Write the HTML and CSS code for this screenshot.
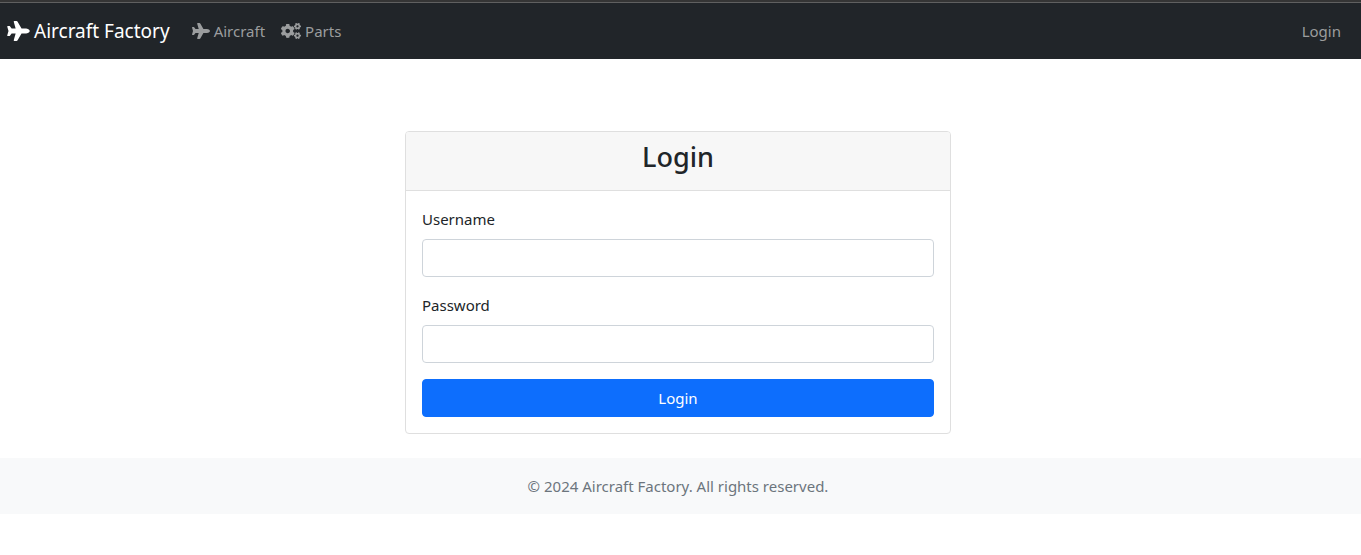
FILE: index.html
```html
<!DOCTYPE html>
<html lang="en">
<head>
<meta charset="utf-8">
<meta name="viewport" content="width=device-width, initial-scale=1">
<title>Login - Aircraft Factory</title>
<link rel="stylesheet" href="styles.css">
</head>
<body>
<svg class="sprite" aria-hidden="true">
  <symbol id="plane" viewBox="0 0 576 512"><path d="M482.3 192c34.2 0 93.7 29 93.7 64c0 36-59.5 64-93.7 64l-116.6 0L265.2 495.9c-5.7 10-16.3 16.1-27.8 16.1l-56.2 0c-10.6 0-18.3-10.2-15.4-20.4l49-171.6L112 320 68.8 377.6c-3 4-7.8 6.4-12.8 6.4l-42 0c-7.8 0-14-6.3-14-14c0-1.3 .2-2.6 .5-3.9L32 256 .5 145.9c-.4-1.3-.5-2.6-.5-3.9c0-7.8 6.3-14 14-14l42 0c5 0 9.8 2.4 12.8 6.4L112 192l102.9 0-49-171.6C162.9 10.2 170.6 0 181.2 0l56.2 0c11.5 0 22.1 6.2 27.8 16.1L365.7 192l116.6 0z"/></symbol>
  <symbol id="cogs" viewBox="0 0 640 512">
    <path id="small-cog" d="M512.1 191l-8.2 14.3c-3 5.3-9.4 7.5-15.1 5.4-11.8-4.4-22.6-10.7-32.1-18.6-4.6-3.8-5.8-10.5-2.8-15.7l8.2-14.3c-6.9-8-12.3-17.3-15.9-27.4h-16.5c-6 0-11.2-4.3-12.2-10.3-2-12-2.1-24.6 0-37.1 1-6 6.2-10.4 12.2-10.4h16.5c3.6-10.1 9-19.4 15.9-27.4l-8.2-14.3c-3-5.2-1.9-11.9 2.8-15.7 9.5-7.9 20.4-14.2 32.1-18.6 5.7-2.1 12.1.1 15.1 5.4l8.2 14.3c10.5-1.9 21.2-1.9 31.7 0L552 6.3c3-5.3 9.4-7.5 15.1-5.4 11.8 4.4 22.6 10.7 32.1 18.6 4.6 3.8 5.8 10.5 2.8 15.7l-8.2 14.3c6.9 8 12.3 17.3 15.9 27.4h16.5c6 0 11.2 4.3 12.2 10.3 2 12 2.1 24.6 0 37.1-1 6-6.2 10.4-12.2 10.4h-16.5c-3.6 10.1-9 19.4-15.9 27.4l8.2 14.3c3 5.2 1.9 11.9-2.8 15.7-9.5 7.9-20.4 14.2-32.1 18.6-5.7 2.1-12.1-.1-15.1-5.4l-8.2-14.3c-10.4 1.9-21.2 1.9-31.7 0zm-10.5-58.8c38.5 29.6 82.4-14.3 52.8-52.8-38.5-29.7-82.4 14.3-52.8 52.8z"/>
    <use href="#small-cog" y="299"/>
    <path d="M386.3 286.1l33.7 16.8c10.1 5.8 14.5 18.1 10.5 29.1-8.9 24.2-26.4 46.4-42.6 65.8-7.4 8.9-20.2 11.1-30.3 5.3l-29.1-16.8c-16 13.7-34.6 24.6-54.9 31.7v33.6c0 11.6-8.3 21.6-19.7 23.6-24.6 4.2-50.4 4.4-75.9 0-11.5-2-20-11.9-20-23.6V418c-20.3-7.2-38.9-18-54.9-31.7L74 403c-10 5.8-22.9 3.6-30.3-5.3-16.2-19.4-33.3-41.6-42.2-65.7-4-10.9.4-23.2 10.5-29.1l33.3-16.8c-3.9-20.9-3.9-42.4 0-63.4L12 205.8c-10.1-5.8-14.6-18.1-10.5-29 8.9-24.2 26-46.4 42.2-65.8 7.4-8.9 20.2-11.1 30.3-5.3l29.1 16.8c16-13.7 34.6-24.6 54.9-31.7V57.1c0-11.5 8.2-21.5 19.6-23.5 24.6-4.2 50.5-4.4 76-.1 11.5 2 20 11.9 20 23.6v33.6c20.3 7.2 38.9 18 54.9 31.7l29.1-16.8c10-5.8 22.9-3.6 30.3 5.3 16.2 19.4 33.2 41.6 42.1 65.8 4 10.9.1 23.2-10 29.1l-33.7 16.8c3.9 21 3.9 42.5 0 63.5zm-117.6 21.1c59.2-77-28.7-164.9-105.7-105.7-59.2 77 28.7 164.9 105.7 105.7z"/>
  </symbol>
</svg>
<header class="navbar">
  <a class="brand" href="#"><svg class="brand-icon" aria-hidden="true"><use href="#plane"/></svg>Aircraft Factory</a>
  <nav class="nav">
    <a class="nav-link" href="#"><svg class="plane-icon" aria-hidden="true"><use href="#plane"/></svg>Aircraft</a>
    <a class="nav-link" href="#"><svg class="cogs-icon" aria-hidden="true"><use href="#cogs"/></svg>Parts</a>
    <a class="nav-link nav-login" href="#">Login</a>
  </nav>
</header>
<main class="main">
  <section class="card">
    <div class="card-header"><h1 class="card-title">Login</h1></div>
    <form class="card-body">
      <div class="field">
        <label class="label" for="username">Username</label>
        <input class="input" id="username" name="username" type="text">
      </div>
      <div class="field">
        <label class="label" for="password">Password</label>
        <input class="input" id="password" name="password" type="password">
      </div>
      <button class="button" type="submit">Login</button>
    </form>
  </section>
</main>
<footer class="footer">© 2024 Aircraft Factory. All rights reserved.</footer>
</body>
</html>
```
FILE: styles.css
```css
* {
  box-sizing: border-box;
}

body {
  margin: 0;
  background: #fff;
  color: #212529;
  font-family: "Segoe UI", "Noto Sans", "Open Sans", sans-serif;
  font-size: 15px;
  line-height: 24px;
}

.sprite {
  position: absolute;
  width: 0;
  height: 0;
}

.navbar {
  display: flex;
  align-items: center;
  min-height: 59px;
  padding: 0 12px 0 7px;
  border-top: 2px solid #353535;
  background: #212529;
  box-shadow: inset 0 1px #606060;
}

.brand,
.nav-link {
  display: flex;
  align-items: center;
  text-decoration: none;
}

.brand {
  gap: 4px;
  margin-right: 14px;
  color: #fff;
  font-size: 19px;
}

.nav {
  display: flex;
  flex: 1;
}

.nav-link {
  gap: 4px;
  padding: 8px;
  color: #9b9d9e;
}

.nav-login {
  margin-left: auto;
}

.brand-icon,
.plane-icon,
.cogs-icon {
  fill: currentColor;
}

.brand-icon {
  width: 23px;
  height: 20px;
}

.plane-icon {
  width: 18px;
  height: 16px;
}

.cogs-icon {
  width: 20px;
  height: 16px;
}

.main {
  display: flex;
  justify-content: center;
  padding: 72px 5px 24px 0;
}

.card {
  width: 100%;
  max-width: 546px;
  border: 1px solid #dfdfdf;
  border-radius: 4px;
  overflow: hidden;
}

.card-header {
  padding: 8px 16px 16px;
  border-bottom: 1px solid #dfdfdf;
  background: #f7f7f7;
  text-align: center;
}

.card-title {
  margin: 0;
  font-size: 27px;
  font-weight: 500;
  line-height: 34px;
}

.card-body {
  padding: 16px;
}

.field {
  margin-bottom: 16px;
}

.label {
  display: block;
  margin-bottom: 8px;
}

.input,
.button {
  display: block;
  width: 100%;
  height: 38px;
  padding: 6px 12px;
  border: 1px solid #ced4da;
  border-radius: 4px;
  background: #fff;
  color: inherit;
  font: inherit;
}

.button {
  border-color: #0d6efd;
  background: #0d6efd;
  color: #fff;
}

.footer {
  padding: 16px 5px 16px 0;
  background: #f8f9fa;
  color: #6c757d;
  text-align: center;
}
```
